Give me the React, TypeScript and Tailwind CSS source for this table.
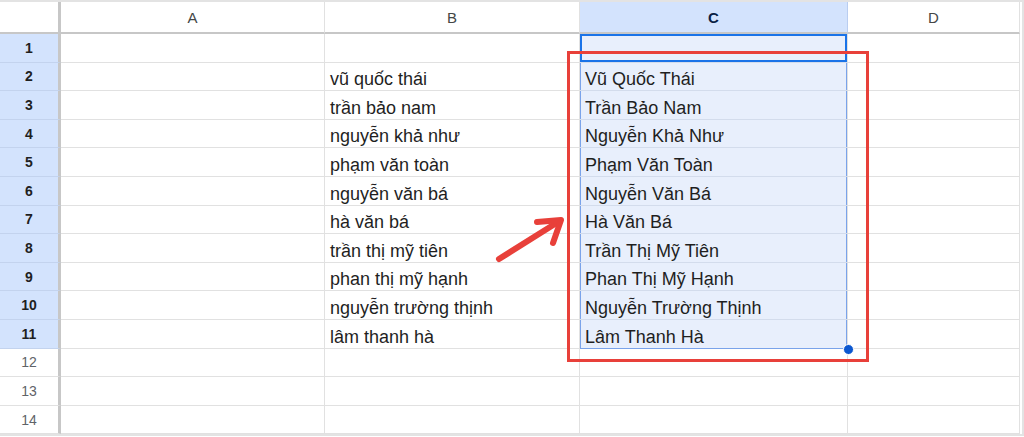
// Spreadsheet view — column C filled with capitalized names, annotated with a red box and arrow
import React from 'react';

const rows: [string, string][] = [
  ['', ''],
  ['vũ quốc thái', 'Vũ Quốc Thái'],
  ['trần bảo nam', 'Trần Bảo Nam'],
  ['nguyễn khả như', 'Nguyễn Khả Như'],
  ['phạm văn toàn', 'Phạm Văn Toàn'],
  ['nguyễn văn bá', 'Nguyễn Văn Bá'],
  ['hà văn bá', 'Hà Văn Bá'],
  ['trần thị mỹ tiên', 'Trần Thị Mỹ Tiên'],
  ['phan thị mỹ hạnh', 'Phan Thị Mỹ Hạnh'],
  ['nguyễn trường thịnh', 'Nguyễn Trường Thịnh'],
  ['lâm thanh hà', 'Lâm Thanh Hà'],
  ['', ''],
  ['', ''],
  ['', ''],
];

const cell = 'border-r border-b border-[#e1e1e1] flex items-end px-[5px] leading-[22px] text-[18px] text-[#1f1f1f] whitespace-nowrap overflow-hidden';

// C column selection styling: active cell, range edges, last row closes the range
const selCell = (i: number) => {
  if (i === 0) return 'bg-[#e8effc] border-b-[#d3dcec] shadow-[inset_0_0_0_2px_#1a73e8]';
  if (i === 10) return 'bg-[#e8effc] border-b-[#7aa3ea] shadow-[inset_1px_0_0_#7aa3ea,inset_-1px_0_0_#7aa3ea]';
  if (i < 10) return 'bg-[#e8effc] border-b-[#d3dcec] shadow-[inset_1px_0_0_#7aa3ea,inset_-1px_0_0_#7aa3ea]';
  return '';
};

export default function App() {
  return (
    <div
      className="relative w-[1024px] h-[437px] bg-white overflow-hidden"
      style={{ fontFamily: '"Liberation Sans", Arial, sans-serif' }}
    >
      <div className="border-t-2 border-b-2 border-r-2 border-[#e3e3e3] w-[1024px]">
        <div className="grid grid-cols-[61px_264px_255px_268px_172px] grid-rows-[32px_repeat(14,28.6px)]">
          {/* Header row */}
          <div className="border-r-[3px] border-b-2 border-[#c7c7c7] bg-white" />
          {['A', 'B', 'C', 'D'].map(col => (
            <div
              key={col}
              className={`flex items-center justify-center pt-[2px] border-b-2 border-[#c7c7c7] text-[15px] ${
                col === 'C'
                  ? 'bg-[#d3e3fd] font-bold text-[#0b1f44] border-r border-r-[#b9cdf0]'
                  : 'bg-white text-[#444746] border-r border-r-[#e1e1e1]'
              }`}
            >
              {col}
            </div>
          ))}

          {/* Body rows */}
          {rows.map(([raw, fixed], i) => {
            const selected = i < 11;
            return (
              <React.Fragment key={i}>
                <div
                  className={`flex items-center justify-center pt-[1px] border-r-[3px] border-b border-r-[#c7c7c7] text-[14px] ${
                    selected
                      ? 'bg-[#d3e3fd] font-bold text-[#1f1f1f] border-b-[#c3d3ee]'
                      : 'bg-white text-[#5f6368] border-b-[#e1e1e1]'
                  }`}
                >
                  {i + 1}
                </div>
                <div className={cell} />
                <div className={cell}>{raw}</div>
                <div className={`${cell} ${selCell(i)}`}>{fixed}</div>
                <div className={cell} />
              </React.Fragment>
            );
          })}
        </div>
      </div>

      {/* Fill handle */}
      <div className="absolute left-[843px] top-[344px] w-[11px] h-[11px] rounded-full bg-[#0b57d0] border border-white" />

      {/* Red annotation box */}
      <div className="absolute left-[567px] top-[51px] w-[302px] h-[311px] border-[3px] border-[#e8403a] pointer-events-none" />

      {/* Red arrow */}
      <svg className="absolute left-0 top-0 pointer-events-none" width={1024} height={437}>
        <g stroke="#e8403a" strokeWidth={6} strokeLinecap="round" strokeLinejoin="round" fill="none">
          <line x1={499} y1={259} x2={558} y2={222} />
          <polyline points="537,222 561,220 553,243" />
        </g>
      </svg>
    </div>
  );
}
